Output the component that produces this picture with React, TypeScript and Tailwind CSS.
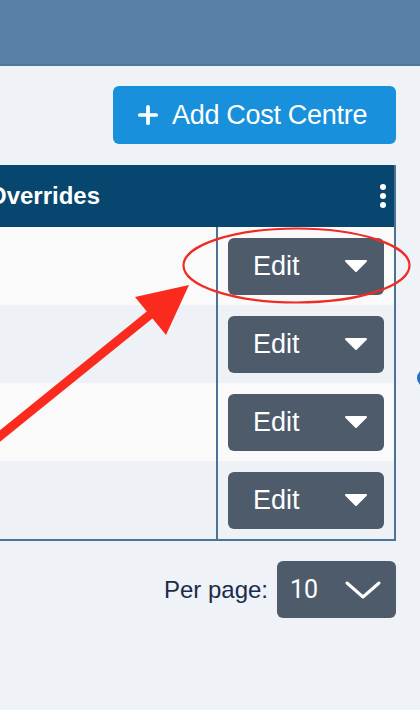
import { Plus } from 'lucide-react'

const rows = [0, 1, 2, 3]

export default function App() {
  return (
    <div className="relative h-[710px] w-[420px] overflow-hidden bg-[#eff2f6] font-['Liberation_Sans',Arial,sans-serif]">
      {/* top bar */}
      <div className="h-[66px] bg-[#5881a8] border-b-2 border-[#4f7599]" />

      <div className="flex flex-col items-end pr-[24px]">
        <button className="mt-[20px] flex h-[58px] w-[283px] items-center gap-[10px] rounded-[6px] bg-[#1890dc] pl-[21px] text-[27px] text-white">
          <Plus className="h-[28px] w-[28px]" strokeWidth={3.2} />
          <span className="tracking-[-0.3px]">Add Cost Centre</span>
        </button>

        {/* table */}
        <div className="mt-[21px] w-[396px] border-r-2 border-b-2 border-[#4c7295]">
          <div className="flex h-[62px] items-center justify-between bg-[#06466f] pr-[8px] text-white">
            <span className="-ml-[12px] text-[24px] font-bold">Overrides</span>
            <div className="flex flex-col gap-[3px]">
              <span className="h-[6px] w-[6px] rounded-full bg-white" />
              <span className="h-[6px] w-[6px] rounded-full bg-white" />
              <span className="h-[6px] w-[6px] rounded-full bg-white" />
            </div>
          </div>
          {rows.map((r) => (
            <div
              key={r}
              className={`grid h-[78px] grid-cols-[216px_1fr] ${r % 2 === 0 ? 'bg-[#fafafa]' : 'bg-[#eef1f6]'}`}
            >
              <div />
              <div className="flex items-center border-l-2 border-[#4c7295] pl-[10px]">
                <button className="flex h-[57px] w-[156px] items-center justify-between rounded-[6px] bg-[#4d5b6b] pl-[25px] pr-[16px] text-[27px] text-white">
                  <span>Edit</span>
                  <svg width="24" height="14" viewBox="0 0 24 14">
                    <path d="M2 2 L22 2 L12 12 Z" fill="white" stroke="white" strokeWidth="2" strokeLinejoin="round" />
                  </svg>
                </button>
              </div>
            </div>
          ))}
        </div>

        {/* pagination */}
        <div className="mt-[20px] flex items-center gap-[9px]">
          <span className="text-[24px] text-[#1b2b4b]">Per page:</span>
          <button className="flex h-[57px] w-[119px] items-center justify-between rounded-[6px] bg-[#4d5b6b] pl-[13px] pr-[15px] font-['Roboto',sans-serif] text-[25px] text-white">
            <span>10</span>
            <svg width="36" height="20" viewBox="0 0 36 20" fill="none">
              <path d="M2 3 L18 17 L34 3" stroke="white" strokeWidth="3" strokeLinecap="round" strokeLinejoin="round" />
            </svg>
          </button>
        </div>
      </div>

      {/* partially visible icon at right edge */}
      <div className="absolute left-[417px] top-[369px] h-[18px] w-[18px] rounded-full border-[3px] border-[#1e6fc4]" />

      {/* annotation overlay */}
      <svg className="pointer-events-none absolute left-0 top-0" width="420" height="710" viewBox="0 0 420 710">
        <ellipse cx="296.5" cy="265.5" rx="113" ry="37" fill="none" stroke="#ef2b24" strokeWidth="2.2" />
        <line x1="-10" y1="444" x2="152" y2="313" stroke="#fb2a1e" strokeWidth="9" />
        <polygon points="189,285 135,297 166,335" fill="#fb2a1e" />
      </svg>
    </div>
  )
}
